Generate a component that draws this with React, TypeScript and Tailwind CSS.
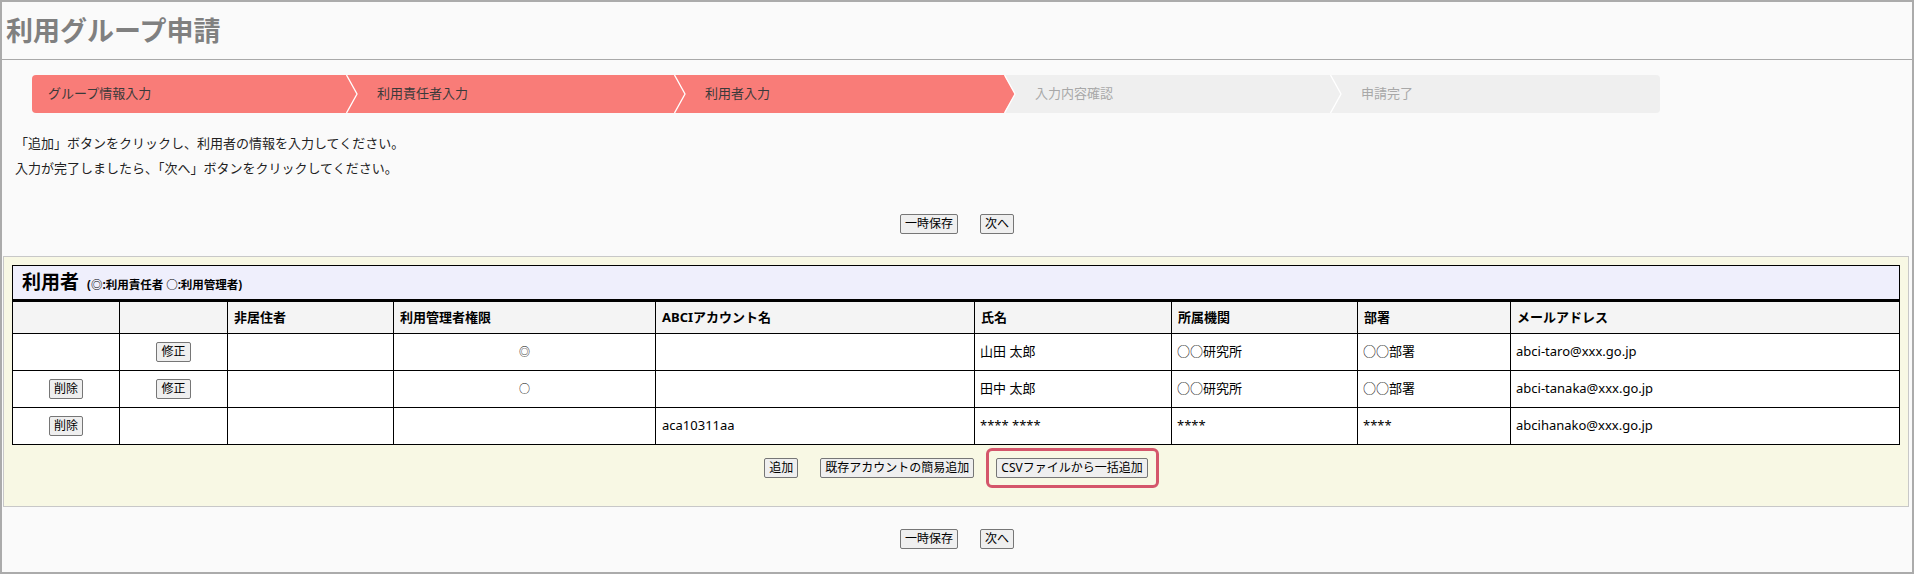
import React from "react";

const steps = [
  { label: "グループ情報入力", w: "w-[315px]", pl: "pl-[16px]", done: true },
  { label: "利用責任者入力", w: "w-[328px]", pl: "pl-[30px]", done: true },
  { label: "利用者入力", w: "w-[330px]", pl: "pl-[30px]", done: true },
  { label: "入力内容確認", w: "w-[326px]", pl: "pl-[30px]", done: false },
  { label: "申請完了", w: "flex-1", pl: "pl-[30px]", done: false },
];

const users = [
  { del: false, edit: true, nonres: "", perm: "◎", abci: "", name: "山田 太郎", org: "○○研究所", dept: "○○部署", mail: "abci-taro@xxx.go.jp" },
  { del: true, edit: true, nonres: "", perm: "○", abci: "", name: "田中 太郎", org: "○○研究所", dept: "○○部署", mail: "abci-tanaka@xxx.go.jp" },
  { del: true, edit: false, nonres: "", perm: "", abci: "aca10311aa", name: "**** ****", org: "****", dept: "****", mail: "abcihanako@xxx.go.jp" },
];

const Btn = ({ children }: { children: React.ReactNode }) => (
  <button className="h-[20px] rounded-[2px] border border-[#767676] bg-[#efefef] px-[4px] text-[12px] leading-none text-black">
    {children}
  </button>
);

const App = () => {
  return (
    <div className="flex h-[574px] w-[1914px] flex-col border-2 border-[#ababab] bg-[#fafafa] font-['Noto_Sans','Noto_Sans_CJK_JP',sans-serif] text-[#222]">
      {/* タイトル */}
      <div className="flex h-[58px] shrink-0 items-center border-b border-[#a9a9a9] px-[4px]">
        <h1 className="text-[27px] font-bold leading-none text-[#808080]">利用グループ申請</h1>
      </div>

      {/* ステップ */}
      <div className="ml-[30px] mt-[15px] flex h-[38px] w-[1628px] shrink-0 overflow-hidden rounded-[4px]">
        {steps.map((s, i) => (
          <div
            key={s.label}
            className={`relative flex h-full items-center ${s.w} ${s.pl} ${
              s.done ? "bg-[#f97c78] text-[#3a3a3a]" : "bg-[#efefef] text-[#a8a8a8]"
            } text-[13px]`}
          >
            {s.label}
            {i < steps.length - 1 && (
              <svg className="absolute -right-[11px] top-0 z-10 h-[38px] w-[12px]" viewBox="0 0 12 38">
                <polygon points="0,0 11,19 0,38" fill={s.done ? "#f97c78" : "#efefef"} />
                <polyline points="0.5,0 11,19 0.5,38" fill="none" stroke="#ffffff" strokeWidth="1.3" />
              </svg>
            )}
          </div>
        ))}
      </div>

      {/* 説明 */}
      <div className="mt-[18px] pl-[13px] text-[13px] leading-[25px]">
        <p>「追加」ボタンをクリックし、利用者の情報を入力してください。</p>
        <p>入力が完了しましたら、「次へ」ボタンをクリックしてください。</p>
      </div>

      <div className="mt-[33px] flex justify-center gap-[22px]">
        <Btn>一時保存</Btn>
        <Btn>次へ</Btn>
      </div>

      {/* 利用者 */}
      <div className="ml-[1px] mr-[3px] mt-[22px] border border-[#c8c8c8] bg-[#f8f8e4] px-[8px] pb-[28px] pt-[8px]">
        <table className="w-[1888px] table-fixed border-collapse border border-black bg-white text-[13px]">
          <colgroup>
            <col className="w-[107px]" />
            <col className="w-[108px]" />
            <col className="w-[166px]" />
            <col className="w-[262px]" />
            <col className="w-[319px]" />
            <col className="w-[197px]" />
            <col className="w-[186px]" />
            <col className="w-[153px]" />
            <col />
          </colgroup>
          <tbody>
            <tr className="h-[35px]">
              <td colSpan={9} className="border-b-[3px] border-black bg-[#efeffc] px-[9px]">
                <span className="text-[19px] font-bold text-black">利用者</span>
                <span className="ml-[8px] text-[11.5px] font-bold text-black">(◎:利用責任者 ○:利用管理者)</span>
              </td>
            </tr>
            <tr className="h-[33px] bg-[#f4f4f4] font-bold text-black">
              {["", "", "非居住者", "利用管理者権限", "ABCIアカウント名", "氏名", "所属機関", "部署", "メールアドレス"].map((h, i) => (
                <th key={i} className="border border-black px-[6px] text-left font-bold">
                  {h}
                </th>
              ))}
            </tr>
            {users.map((u, i) => (
              <tr key={i} className="h-[37px] text-black">
                <td className="border border-black text-center">{u.del && <Btn>削除</Btn>}</td>
                <td className="border border-black text-center">{u.edit && <Btn>修正</Btn>}</td>
                <td className="border border-black px-[6px]">{u.nonres}</td>
                <td className="border border-black text-center text-[11px]">{u.perm}</td>
                <td className="border border-black px-[6px]">{u.abci}</td>
                <td className="border border-black px-[5px]">{u.name}</td>
                <td className="border border-black px-[5px]">{u.org}</td>
                <td className="border border-black px-[5px]">{u.dept}</td>
                <td className="border border-black px-[5px]">{u.mail}</td>
              </tr>
            ))}
          </tbody>
        </table>

        <div className="mt-[13px] flex items-center justify-center gap-[22px]">
          <Btn>追加</Btn>
          <Btn>既存アカウントの簡易追加</Btn>
          <span className="relative inline-flex">
            <Btn>CSVファイルから一括追加</Btn>
            <span className="pointer-events-none absolute -bottom-[10px] -left-[10px] -right-[11px] -top-[10px] rounded-[6px] border-[3px] border-[#d4566b]" />
          </span>
        </div>
      </div>

      <div className="mt-[22px] flex justify-center gap-[22px]">
        <Btn>一時保存</Btn>
        <Btn>次へ</Btn>
      </div>
    </div>
  );
};

export default App;
